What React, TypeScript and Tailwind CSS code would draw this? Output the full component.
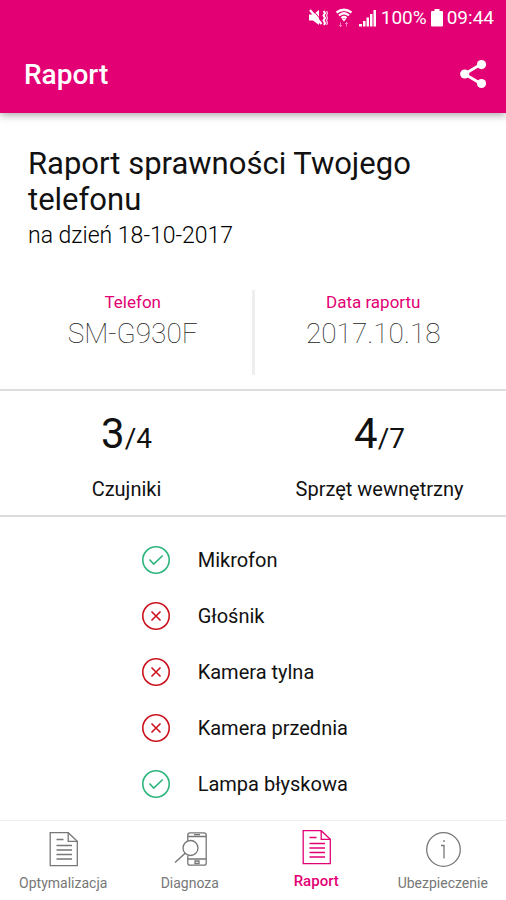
import type { ReactNode } from 'react';

const checks = [
  { name: 'Mikrofon', ok: true },
  { name: 'Głośnik', ok: false },
  { name: 'Kamera tylna', ok: false },
  { name: 'Kamera przednia', ok: false },
  { name: 'Lampa błyskowa', ok: true },
];

const stats = [
  { passed: 3, total: 4, label: 'Czujniki' },
  { passed: 4, total: 7, label: 'Sprzęt wewnętrzny' },
];

function MutedIcon() {
  return (
    <svg viewBox="0 0 20 20" className="w-5 h-5" fill="none" aria-hidden="true">
      <path d="M0 6.500h4L10 2v15l-6-4.500H0z" fill="#fff" />
      <path d="M3.500 1.500l9 11" stroke="#e20074" strokeWidth="1" />
      <path d="M1 2l11.500 14" stroke="#fff" strokeWidth="2.200" />
      <path d="M14.500 3l1.500 2-1.500 2.500 1.500 2.500-1.500 2.500 1.500 2.500-1 2" stroke="#fff" strokeWidth="2" />
      <path d="M17.500 3l1 2-1 2.500 1 2.500-1 2.500 1 2.500-1 2" stroke="#fff" strokeWidth="1.200" opacity=".8" />
    </svg>
  );
}

function WifiIcon() {
  return (
    <svg viewBox="0 0 18 20" className="w-[18px] h-5" fill="none" stroke="#fff" aria-hidden="true">
      <path d="M1.500 4.500Q9-1 16.500 4.500M4 7.500q5-4.500 10 0M6.500 10q2.500-2.200 5 0" strokeWidth="2.200" />
      <path d="M6.500 10.500h5L9 13.500z" fill="#fff" stroke="none" />
      <path d="M5.500 14.500v4M4 17l1.500 1.500L7 17M11.500 18.500v-4M10 16l1.500-1.500L13 16" strokeWidth="1" opacity=".5" />
    </svg>
  );
}

function SignalIcon() {
  return (
    <svg viewBox="0 0 18 20" className="w-[18px] h-5" fill="#fff" aria-hidden="true">
      <path d="M0 16h3v2.500H0zM4 13h2.500v5.500H4zM7.500 9.500H10v9H7.500zM11 6h2.500v12.500H11zM14.500 2H17v16.500h-2.500z" />
    </svg>
  );
}

function BatteryIcon() {
  return (
    <svg viewBox="0 0 12 20" className="w-3 h-5" fill="#fff" aria-hidden="true">
      <path d="M3.500 1h5v2H11q1 0 1 1v13.500q0 1-1 1H1q-1 0-1-1V4q0-1 1-1h2.500z" />
    </svg>
  );
}

function ShareIcon() {
  return (
    <svg viewBox="0 0 28 30" className="w-7 h-[30px]" fill="#fff" aria-hidden="true">
      <path d="M21.500 4L4.500 14l17 10" fill="none" stroke="#fff" strokeWidth="2.800" />
      <circle cx="4.700" cy="14" r="4.600" />
      <circle cx="21.500" cy="4.600" r="4.600" />
      <circle cx="21.500" cy="23.500" r="4.600" />
    </svg>
  );
}

function ResultIcon({ ok }: { ok: boolean }) {
  return (
    <svg
      viewBox="0 0 28 28"
      className={ok ? 'w-7 h-7 text-[#2cb47c]' : 'w-7 h-7 text-[#cc1420]'}
      fill="none"
      stroke="currentColor"
      strokeWidth="1.600"
      role="img"
      aria-label={ok ? 'OK' : 'Błąd'}
    >
      <circle cx="14" cy="14" r="13.200" />
      {ok ? <path d="M7.500 13.500l4.200 4.500 9-8.500" /> : <path d="M9.500 9.500l9 9M18.500 9.500l-9 9" />}
    </svg>
  );
}

function DocumentIcon() {
  return (
    <svg viewBox="0 0 36 36" className="w-9 h-9" fill="none" stroke="currentColor" strokeWidth="1.300" aria-hidden="true">
      <path d="M5.200 1.700h18l9.100 8.600v24.400H5.200z" />
      <path d="M23.200 1.700v8.600h9.100" />
      <path d="M11.500 8.500h7M11.500 14.500H27M11.500 19H27M11.500 23.500H27M11.500 28H27" strokeWidth="1.400" />
    </svg>
  );
}

function DiagnoseIcon() {
  return (
    <svg viewBox="0 0 36 36" className="w-9 h-9" fill="none" stroke="currentColor" strokeWidth="1.300" aria-hidden="true">
      <path d="M15.800 9.500V4q0-2.200 2.200-2.200h14q2.200 0 2.200 2.200v28q0 2.200-2.200 2.200H18q-2.200 0-2.200-2.200v-7.500" />
      <path d="M15.800 5.500h18.400M15.800 28h18.400M22 3.700h6" />
      <path d="M23 30h4v2.500h-4z" />
      <circle cx="18.500" cy="17" r="7.500" fill="#fff" />
      <path d="M13.200 22.300L3 31.500" strokeWidth="1.500" />
    </svg>
  );
}

function InfoIcon() {
  return (
    <svg viewBox="0 0 36 36" className="w-9 h-9" fill="none" stroke="currentColor" strokeWidth="1.300" aria-hidden="true">
      <circle cx="18.500" cy="18.500" r="16.800" />
      <path d="M16 14.500h3v13M19 9v2" />
    </svg>
  );
}

function Tab({ label, icon, active = false }: { label: string; icon: ReactNode; active?: boolean }) {
  return (
    <a
      href="#"
      aria-current={active ? 'page' : undefined}
      className={
        active
          ? 'flex flex-1 flex-col items-center gap-1 pt-2 text-[#e20074] text-[15px] leading-6 font-medium'
          : 'flex flex-1 flex-col items-center gap-1 pt-[10px] text-[#777] text-sm leading-6'
      }
    >
      {icon}
      {label}
    </a>
  );
}

export default function App() {
  return (
    <div className="flex flex-col min-h-screen bg-white text-[#111] font-['Roboto',sans-serif]">
      <header className="relative bg-[#e20074] text-white shadow-[0_2px_8px_rgba(0,0,0,0.35)]">
        <div className="flex items-center justify-end h-9 pr-3 text-[19px]">
          <MutedIcon />
          <span className="mx-1.5"><WifiIcon /></span>
          <SignalIcon />
          <span className="mx-1">100%</span>
          <BatteryIcon />
          <span className="ml-1">09:44</span>
        </div>
        <div className="flex items-center justify-between h-[77px] pl-6 pr-[18px]">
          <h1 className="text-[28px] font-medium">Raport</h1>
          <button type="button" aria-label="Udostępnij">
            <ShareIcon />
          </button>
        </div>
      </header>

      <main className="flex-1">
        <section className="px-7 pt-[33px]">
          <h2 className="text-[31px] leading-9">Raport sprawności Twojego telefonu</h2>
          <p className="text-[23px] leading-9 font-light text-black">na dzień 18-10-2017</p>
        </section>

        <section className="flex px-[14px] pt-9 pb-[14px] border-b-2 border-[#ddd] text-center">
          <div className="flex-1 h-[85px] border-r-3 border-[#eee]">
            <h3 className="text-[17px] leading-6 text-[#e20074]">Telefon</h3>
            <p className="text-[28px] leading-10 font-thin text-[#222]">SM-G930F</p>
          </div>
          <div className="flex-1">
            <h3 className="text-[17px] leading-6 text-[#e20074]">Data raportu</h3>
            <p className="text-[28px] leading-10 font-thin text-[#222]">2017.10.18</p>
          </div>
        </section>

        <section className="flex border-b-2 border-[#ddd] text-center">
          {stats.map((stat) => (
            <div key={stat.label} className="flex-1 pt-[18px] pb-3">
              <p className="text-[28px] leading-[50px]">
                <span className="text-[42px]">{stat.passed}</span>/{stat.total}
              </p>
              <p className="pt-[11px] text-xl leading-7">{stat.label}</p>
            </div>
          ))}
        </section>

        <ul className="pt-[15px] pl-[28%]">
          {checks.map((check) => (
            <li key={check.name} className="flex items-center gap-7 h-14 text-xl">
              <ResultIcon ok={check.ok} />
              {check.name}
            </li>
          ))}
        </ul>
      </main>

      <nav className="flex h-20 border-t border-[#eee]">
        <Tab label="Optymalizacja" icon={<DocumentIcon />} />
        <Tab label="Diagnoza" icon={<DiagnoseIcon />} />
        <Tab label="Raport" icon={<DocumentIcon />} active />
        <Tab label="Ubezpieczenie" icon={<InfoIcon />} />
      </nav>
    </div>
  );
}
